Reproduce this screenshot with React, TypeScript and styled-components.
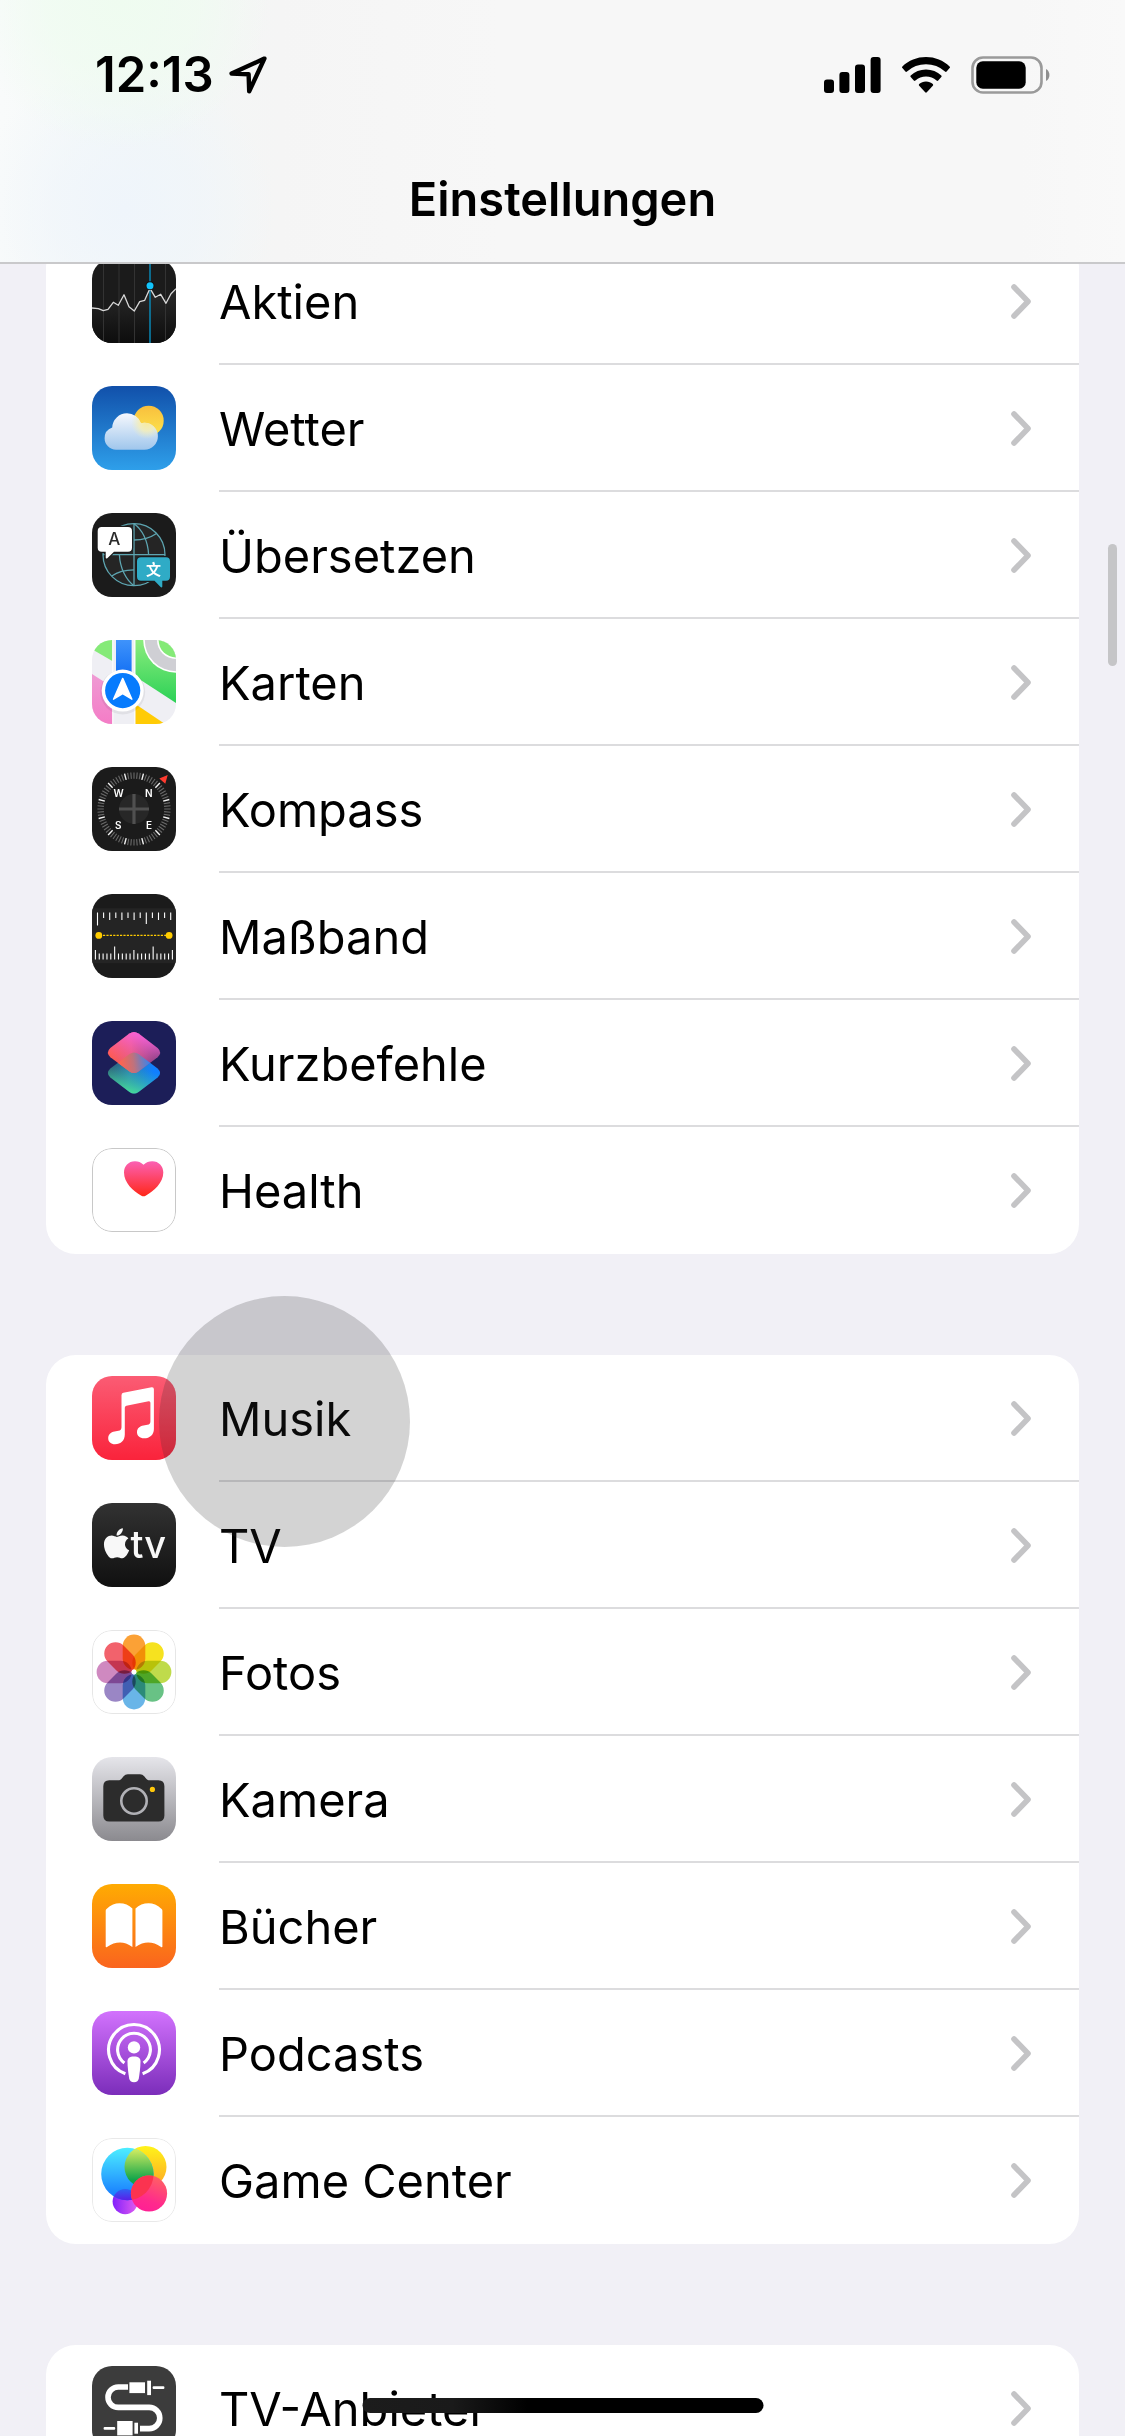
import type { ReactNode } from "react";
import styled, { createGlobalStyle } from "styled-components";
import { FaApple } from "react-icons/fa";

const GlobalStyle = createGlobalStyle`
  *, *::before, *::after { box-sizing: border-box; }
  body {
    margin: 0;
    background: #f1f0f6;
    color: #000;
    font-family: Inter, "Liberation Sans", sans-serif;
  }
`;

const Screen = styled.div`
  position: relative;
  display: flex;
  flex-direction: column;
  height: 100vh;
  overflow: hidden;
`;

const Header = styled.header`
  flex: none;
  padding: 45px 0 33px;
  border-bottom: 2px solid #c9c9cb;
  background:
    radial-gradient(ellipse 150px 150px at 120px 0, #effcf0 0%, rgba(239, 252, 240, 0.7) 50%, rgba(239, 252, 240, 0) 100%),
    radial-gradient(ellipse 150px 150px at 125px 210px, #eff5fb 0%, rgba(239, 245, 251, 0.6) 50%, rgba(239, 245, 251, 0) 100%),
    linear-gradient(90deg, #f9fbfb 0, #f3f7f6 150px, #f5f5f5 280px, #f7f7f7 500px, #f7f7f7 1020px, #f9f9f9 100%);
`;

const StatusBar = styled.div`
  display: flex;
  align-items: center;
  justify-content: space-between;
  padding: 0 75px 0 95px;
`;

const StatusGroup = styled.div<{ $gap: number }>`
  display: flex;
  align-items: center;
  gap: ${({ $gap }) => $gap}px;
`;

const Time = styled.time`
  font-size: 49px;
  line-height: 60px;
  font-weight: 600;
`;

const Title = styled.h1`
  margin: 64px 0 0;
  font-size: 47px;
  line-height: 60px;
  font-weight: 600;
  text-align: center;
`;

const Content = styled.main`
  flex: 1;
  min-height: 0;
  overflow: hidden;
`;

const Groups = styled.div`
  display: flex;
  flex-direction: column;
  gap: 101px;
  margin: -26px 46px 0;
`;

const Card = styled.ul`
  margin: 0;
  padding: 0;
  list-style: none;
  overflow: hidden;
  border-radius: 30px;
  background: #fff;
`;

const RowBody = styled.span`
  display: flex;
  flex: 1;
  align-items: center;
  justify-content: space-between;
  padding: 2px 48px 0 0;
  border-bottom: 2px solid #dcdcde;
`;

const Row = styled.a`
  display: flex;
  height: 127px;
  color: inherit;
  text-decoration: none;

  li:last-child > & ${RowBody} {
    border-bottom-color: transparent;
  }
`;

const IconTile = styled.span<{ $bg: string; $outline?: string }>`
  position: relative;
  flex: none;
  width: 84px;
  height: 84px;
  margin: 21px 43px 22px 46px;
  overflow: hidden;
  border-radius: 20px;
  background: ${({ $bg }) => $bg};

  &::after {
    content: "";
    position: absolute;
    inset: 0;
    border-radius: inherit;
    border: ${({ $outline }) => ($outline ? `1px solid ${$outline}` : "none")};
  }

  > svg { display: block; width: 100%; height: 100%; }
`;

const Label = styled.span`
  font-size: 47px;
  line-height: 60px;
`;

const Touch = styled.div`
  position: absolute;
  top: 1296px;
  left: 159px;
  width: 251px;
  height: 251px;
  border-radius: 50%;
  background: rgba(48, 48, 48, 0.21);
  pointer-events: none;
`;

const ScrollThumb = styled.div`
  position: absolute;
  top: 544px;
  right: 8px;
  width: 9px;
  height: 122px;
  border-radius: 5px;
  background: #c5c5c7;
`;

const HomeIndicator = styled.div`
  position: absolute;
  bottom: 23px;
  left: 50%;
  width: 401px;
  height: 15px;
  transform: translateX(-50%);
  border-radius: 8px;
  background: linear-gradient(90deg, #1c1c1c 0, #1a1a1a 90px, #000 165px);
`;

function Vertical({ id, from, to }: { id: string; from: string; to: string }) {
  return (
    <linearGradient id={id} x1="0" y1="0" x2="0" y2="1">
      <stop offset="0" stopColor={from} />
      <stop offset="1" stopColor={to} />
    </linearGradient>
  );
}

function Art({ children }: { children?: ReactNode }) {
  return (
    <svg viewBox="0 0 84 84" aria-hidden="true">
      {children}
    </svg>
  );
}

const stockLine =
  "0,49 6.3,49.7 11.3,51.7 16,50.3 21.3,43.3 26.3,46.3 32,35.7 37,47.7 42.3,52 47.7,42.7 52.7,41.3 58,29.3 63.3,38.3 68.7,35.3 74,44.3 79,34.7 84,29.7";

function StocksArt() {
  return (
    <Art>
      <defs><Vertical id="stFill" from="#2a2a2a" to="#0d0d0d" /></defs>
      <polygon points={`${stockLine} 84,84 0,84`} fill="url(#stFill)" />
      {[11.5, 27, 42.5, 73.5].map((x) => (
        <path key={x} d={`M${x} 0V84`} stroke="#333" strokeWidth="1" />
      ))}
      <path d="M58 0V84" stroke="#0a87b4" strokeWidth="1.5" />
      <polyline points={stockLine} fill="none" stroke="#d8d8d8" strokeWidth="1.3" strokeLinejoin="round" />
      <circle cx="58" cy="26.7" r="4.4" fill="#111" />
      <circle cx="58" cy="26.7" r="3.5" fill="#12c4fb" />
    </Art>
  );
}

function WeatherArt() {
  return (
    <Art>
      <defs>
        <Vertical id="wSun" from="#f8bf3d" to="#fde44d" />
        <linearGradient id="wCloud" gradientUnits="userSpaceOnUse" x1="0" y1="27" x2="0" y2="64">
          <stop offset="0" stopColor="#f6f8fd" />
          <stop offset="1" stopColor="#9fc6ec" />
        </linearGradient>
        <radialGradient id="wGlow">
          <stop offset="0" stopColor="#f8ea9a" stopOpacity="0.95" />
          <stop offset="0.5" stopColor="#f6eeb4" stopOpacity="0.8" />
          <stop offset="1" stopColor="#e8edc8" stopOpacity="0" />
        </radialGradient>
        <clipPath id="wShape">
          <circle cx="35" cy="42" r="14.8" />
          <circle cx="24" cy="52.3" r="11.4" />
          <circle cx="52.4" cy="50.2" r="13.5" />
          <rect x="24" y="45" width="28.4" height="18.7" />
        </clipPath>
      </defs>
      <circle cx="56.7" cy="34.7" r="15" fill="url(#wSun)" />
      <g clipPath="url(#wShape)">
        <rect width="84" height="84" fill="url(#wCloud)" />
        <circle cx="55" cy="37" r="16" fill="url(#wGlow)" />
      </g>
    </Art>
  );
}

function TranslateArt() {
  return (
    <Art>
      <g fill="none" stroke="#5da5b1" strokeWidth="1.3">
        <circle cx="42" cy="41.7" r="31" fill="#252525" />
        <path d="M42 10.7V72.7M11 41.7H73" />
        <path d="M42 10.7C50 16 56 28 56.6 41.7M42 72.7C34 67 28 55 27.4 41.7" />
        <path d="M42 27C50 27 58 25 64.5 20.5M42 56.8C34 56.8 26 58.5 19.8 63" />
      </g>
      <g stroke="#1b1b1b" strokeWidth="2.4" paintOrder="stroke">
        <path
          d="M9.7 14H36a4 4 0 0 1 4 4V34.7a4 4 0 0 1-4 4H22L15.3 45.2c-1 .8-1.6.4-1.6-.7V38.7H9.7a4 4 0 0 1-4-4V18a4 4 0 0 1 4-4Z"
          fill="#fff"
        />
        <path
          d="M49 44.3H74a4 4 0 0 1 4 4V63.7a4 4 0 0 1-4 4H70.3V73.4c0 1.2-.9 1.4-1.7.7L62.5 67.7H49a4 4 0 0 1-4-4V48.3a4 4 0 0 1 4-4Z"
          fill="#2fabc6"
        />
      </g>
      <text x="22.2" y="32.4" textAnchor="middle" fontFamily="Inter, sans-serif" fontSize="17" fontWeight="500" fill="#2a2a2a">A</text>
      <text x="61.5" y="61.6" textAnchor="middle" fontFamily="'Noto Sans CJK SC', sans-serif" fontSize="15" fontWeight="700" fill="#fff">文</text>
    </Art>
  );
}

function MapsArt() {
  return (
    <Art>
      <defs>
        <Vertical id="mGreen" from="#8bec7d" to="#2bd156" />
        <Vertical id="mPink" from="#ef9bd4" to="#f47cc6" />
        <Vertical id="mBlue" from="#3f93fb" to="#0d6bf3" />
      </defs>
      <path d="M0 0H20.3V21L0 9.2Z" fill="#85ea78" />
      <path d="M43.3 0H84V63L43.3 36.5Z" fill="url(#mGreen)" />
      <path d="M0 34L20.3 47V84H0Z" fill="url(#mPink)" />
      <path d="M43.3 64L73 84H43.3Z" fill="#ffcb05" />
      <path d="M20.8 0V84M42.8 0V84" stroke="#fff" strokeWidth="1" />
      <rect x="24" width="15.6" height="40" fill="url(#mBlue)" />
      <circle cx="84" cy="0" r="32.8" fill="#fff" />
      <circle cx="84" cy="0" r="31.2" fill="#cfcfd4" />
      <circle cx="84" cy="0" r="19" fill="#fff" />
      <circle cx="84" cy="0" r="17.4" fill="#84ea77" />
      <circle cx="30.7" cy="52" r="22.5" fill="#000" opacity="0.06" />
      <circle cx="30.7" cy="50.6" r="21" fill="#fff" />
      <circle cx="30.7" cy="50.6" r="17.6" fill="#067bfd" />
      <path d="M30.7 38.4L39.9 59.2L30.7 53.6L21.5 59.2Z" fill="#fff" stroke="#fff" strokeWidth="1.4" strokeLinejoin="round" />
    </Art>
  );
}

function CompassArt() {
  const ticks = Array.from({ length: 72 }, (_, i) => i * 5);
  return (
    <Art>
      {ticks.map((deg) => {
        const major = deg % 30 === 15;
        return (
          <path
            key={deg}
            d="M42 5.4V11.8"
            transform={`rotate(${deg} 42 42)`}
            stroke={major ? "#f4f4f4" : "#6a6a6a"}
            strokeWidth={major ? 1.4 : 1.1}
          />
        );
      })}
      <circle cx="42" cy="42" r="15" fill="#272727" />
      <path d="M42 27V57M27 42H57" stroke="#505050" strokeWidth="3.2" />
      <path d="M67.3 11.4L75.7 8L73.3 16.8Z" fill="#ff3b2f" />
      <g fontFamily="Inter, sans-serif" fontSize="10" fontWeight="600" fill="#fff" textAnchor="middle">
        <text x="26.5" y="29.8">W</text>
        <text x="56.7" y="29.8">N</text>
        <text x="26.3" y="61.6">S</text>
        <text x="57" y="61.6">E</text>
      </g>
    </Art>
  );
}

function MeasureArt() {
  const top = Array.from({ length: 13 }, (_, i) => ({
    x: 5.5 + i * 6.1,
    h: i === 0 ? 13 : i === 8 ? 11.5 : i % 2 ? 5.5 : 7.5,
  }));
  const bottom = Array.from({ length: 21 }, (_, i) => ({
    x: 3.4 + i * 3.85,
    h: i % 10 === 5 ? 13 : i % 5 === 0 ? 9.5 : 6,
  }));
  return (
    <Art>
      <rect y="14.3" width="84" height="55" fill="#242424" />
      {top.map(({ x, h }) => (
        <path key={x} d={`M${x} 18.4v${h}`} stroke="#fff" strokeWidth="1.1" />
      ))}
      {bottom.map(({ x, h }) => (
        <path key={x} d={`M${x} 65.4v${-h}`} stroke="#fff" strokeWidth="1.1" />
      ))}
      <path d="M11 41.4H74" stroke="#ffcc00" strokeWidth="1.4" strokeDasharray="2.2 1.2" />
      <circle cx="6.8" cy="41.4" r="3.4" fill="#ffcc00" />
      <circle cx="77.1" cy="41.4" r="3.4" fill="#ffcc00" />
    </Art>
  );
}

const diamond = (cy: number) =>
  `M37.5 ${cy - 19}Q42 ${cy - 22} 46.5 ${cy - 19}L65.6 ${cy - 4.6}Q70.6 ${cy} 65.6 ${cy + 4.6}L46.5 ${cy + 19}Q42 ${cy + 22} 37.5 ${cy + 19}L18.4 ${cy + 4.6}Q13.4 ${cy} 18.4 ${cy - 4.6}Z`;

function ShortcutsArt() {
  return (
    <Art>
      <defs>
        <linearGradient id="kBlue" gradientUnits="userSpaceOnUse" x1="18" y1="46" x2="62" y2="50">
          <stop offset="0" stopColor="#2c4f72" stopOpacity="0.9" />
          <stop offset="0.45" stopColor="#2b84b4" />
          <stop offset="1" stopColor="#107fff" />
        </linearGradient>
        <linearGradient id="kGreen" gradientUnits="userSpaceOnUse" x1="38" y1="74" x2="46" y2="46">
          <stop offset="0" stopColor="#4be394" />
          <stop offset="1" stopColor="#35b9a8" stopOpacity="0" />
        </linearGradient>
        <linearGradient id="kPink" gradientUnits="userSpaceOnUse" x1="46" y1="10" x2="34" y2="44">
          <stop offset="0" stopColor="#fb62e0" />
          <stop offset="1" stopColor="#fb62b0" stopOpacity="0" />
        </linearGradient>
        <linearGradient id="kRed" gradientUnits="userSpaceOnUse" x1="18" y1="34" x2="66" y2="30">
          <stop offset="0" stopColor="#ff5a4d" />
          <stop offset="0.45" stopColor="#e45a76" />
          <stop offset="0.75" stopColor="#8c4279" />
          <stop offset="1" stopColor="#3b2a5c" />
        </linearGradient>
        <linearGradient id="kMix" gradientUnits="userSpaceOnUse" x1="28" y1="44" x2="58" y2="40">
          <stop offset="0" stopColor="#ff644f" />
          <stop offset="0.45" stopColor="#c0727c" />
          <stop offset="1" stopColor="#3484f0" />
        </linearGradient>
        <clipPath id="kClip"><path d={diamond(31.6)} /></clipPath>
      </defs>
      <path d={diamond(52)} fill="url(#kBlue)" />
      <path d={diamond(52)} fill="url(#kGreen)" />
      <path d={diamond(31.6)} fill="url(#kRed)" />
      <path d={diamond(31.6)} fill="url(#kPink)" />
      <g clipPath="url(#kClip)"><path d={diamond(52)} fill="url(#kMix)" /></g>
    </Art>
  );
}

function HealthArt() {
  return (
    <Art>
      <defs><Vertical id="hHeart" from="#fb61b4" to="#ff2718" /></defs>
      <path
        d="M51.5 16.8C54 14.4 57 13.3 60.2 13.3C66.8 13.3 71.3 18.2 71.3 24.6C71.3 34.5 62 43.3 53.6 47.8Q51.5 48.9 49.4 47.8C41 43.3 32 34.5 32 24.6C32 18.2 36.4 13.3 43 13.3C46.2 13.3 49 14.4 51.5 16.8Z"
        fill="url(#hHeart)"
      />
    </Art>
  );
}

function MusicArt() {
  return (
    <Art>
      <path
        d="M31.4 16.8L59.6 11.3Q61.9 11 61.9 13.2V53C61.9 58.6 58 62.3 52 62.3C47.8 62.3 45 59.6 45 56.2C45 52.6 47.6 50.3 51.5 49.6L55.4 48.8Q58.4 48.2 58.4 45.4V26.7Q58.4 24.9 56.6 25.2L34.4 29.7Q32.8 30.1 32.8 31.8V58.5C32.8 64.4 29 68.2 23 68.2C18.9 68.2 16.2 65.7 16.2 62.2C16.2 58.6 18.7 56.2 22.6 55.5L26.4 54.8Q29.5 54.2 29.5 51.2V19.2Q29.5 17.2 31.4 16.8Z"
        fill="#fff"
      />
    </Art>
  );
}

function TvArt() {
  return (
    <Art>
      <FaApple x="7.4" y="23.2" size={34.3} color="#f8f8f8" />
      <text x="38.6" y="54.8" fontFamily="Inter, sans-serif" fontSize="38" fontWeight="500" fill="#f8f8f8">tv</text>
    </Art>
  );
}

const petals = ["#fba136", "#f6e21f", "#bfdb4b", "#68c285", "#69b5e8", "#9a86c5", "#cf89c0", "#f2626c"];

const Petal = styled.rect`
  mix-blend-mode: multiply;
`;

function PhotosArt() {
  return (
    <Art>
      {petals.map((fill, i) => (
        <Petal key={fill} x="30.7" y="4.6" width="22.6" height="35.2" rx="11.3" fill={fill} transform={`rotate(${i * 45} 42 42)`} />
      ))}
      <circle cx="42" cy="42" r="2.4" fill="#fff" />
    </Art>
  );
}

function CameraArt() {
  return (
    <Art>
      <path
        d="M17.3 23.3H26C28 23.3 29 22.6 30.2 21L31.6 19.3Q33.2 17.3 35.8 17.3H48Q50.6 17.3 52.2 19.3L53.6 21C54.8 22.6 55.8 23.3 57.8 23.3H66.4Q72.4 23.3 72.4 29.3V58.4Q72.4 64.4 66.4 64.4H17.3Q11.3 64.4 11.3 58.4V29.3Q11.3 23.3 17.3 23.3Z"
        fill="#2c2c2c"
      />
      <circle cx="42" cy="44" r="12.7" fill="none" stroke="#b1b1b6" strokeWidth="2.6" />
      <circle cx="60.4" cy="32.4" r="2.6" fill="#ffc80a" />
    </Art>
  );
}

function BooksArt() {
  return (
    <Art>
      <path
        d="M14.5 25C19 21 23 19.3 27.5 19.3C32.5 19.3 37 21 40.4 24.6V62.9C36 60 32 58.6 28 58.6C23.5 58.6 19.5 60 15 63Q13.7 63.6 13.7 62.4V26.8Q13.7 25.7 14.5 25Z"
        fill="#fff"
      />
      <path
        d="M69.6 25C65.1 21 61.1 19.3 56.6 19.3C51.6 19.3 46.9 21 43.5 24.6V62.9C47.9 60 52.1 58.6 56.1 58.6C60.6 58.6 64.6 60 69.1 63Q70.4 63.6 70.4 62.4V26.8Q70.4 25.7 69.6 25Z"
        fill="#fff"
      />
    </Art>
  );
}

function PodcastsArt() {
  return (
    <Art>
      <g fill="none" stroke="#fff" strokeWidth="3.1">
        <path d="M33.4 62.8A25.4 25.4 0 1 1 50.6 62.8" />
        <path d="M32.4 52A16.4 16.4 0 1 1 51.6 52" />
      </g>
      <circle cx="42" cy="36.4" r="6.2" fill="#fff" />
      <path
        d="M42 45.4C46.6 45.4 48.5 47 48.5 50.3C48.5 56 47.6 62.5 46.8 67.6Q46.2 71.3 42 71.3Q37.8 71.3 37.2 67.6C36.4 62.5 35.5 56 35.5 50.3C35.5 47 37.4 45.4 42 45.4Z"
        fill="#fff"
      />
    </Art>
  );
}

function GameCenterArt() {
  return (
    <Art>
      <defs>
        <Vertical id="gBlue" from="#4deeff" to="#1373ff" />
        <Vertical id="gYellow" from="#fff31a" to="#fda424" />
        <linearGradient id="gGreen" gradientUnits="userSpaceOnUse" x1="0" y1="12" x2="0" y2="42">
          <stop offset="0" stopColor="#cdea60" />
          <stop offset="1" stopColor="#10a44a" />
        </linearGradient>
        <linearGradient id="gPink" x1="0.8" y1="0" x2="0.4" y2="1">
          <stop offset="0" stopColor="#ff6560" />
          <stop offset="0.7" stopColor="#ff2a8c" />
          <stop offset="1" stopColor="#ff1f95" />
        </linearGradient>
        <linearGradient id="gPurple" x1="0" y1="0" x2="1" y2="0">
          <stop offset="0" stopColor="#8320fb" />
          <stop offset="1" stopColor="#e25ef0" />
        </linearGradient>
        <linearGradient id="gIndigo" gradientUnits="userSpaceOnUse" x1="0" y1="51" x2="0" y2="62">
          <stop offset="0" stopColor="#2f62f4" />
          <stop offset="1" stopColor="#5a1fe8" />
        </linearGradient>
        <clipPath id="gClip"><circle cx="35.4" cy="36" r="26.2" /></clipPath>
      </defs>
      <circle cx="33.2" cy="63.6" r="12.6" fill="url(#gPurple)" />
      <circle cx="53.5" cy="29" r="21" fill="url(#gYellow)" />
      <circle cx="35.4" cy="36" r="26.2" fill="url(#gBlue)" />
      <g clipPath="url(#gClip)">
        <circle cx="53.5" cy="29" r="21" fill="url(#gGreen)" />
        <circle cx="33.2" cy="63.6" r="12.6" fill="url(#gIndigo)" />
      </g>
      <circle cx="57" cy="55.5" r="18.1" fill="url(#gPink)" />
      <g clipPath="url(#gClip)"><circle cx="57" cy="55.5" r="18.1" fill="#fb3350" /></g>
    </Art>
  );
}

function CableArt() {
  return (
    <Art>
      <path
        d="M36 21H26.2A10.2 10.2 0 0 0 26.2 41.4H57.2A10.6 10.6 0 0 1 57.2 62.6H48"
        fill="none"
        stroke="#fff"
        strokeWidth="5.6"
      />
      <g fill="#fff">
        <rect x="37.4" y="16.3" width="15.6" height="10.8" />
        <rect x="55.2" y="14.7" width="3.8" height="14.4" />
        <rect x="60.6" y="20.3" width="11.8" height="2.7" rx="1" />
        <rect x="25.2" y="55" width="15.4" height="14.4" />
        <rect x="42.4" y="56.7" width="3.6" height="11" />
        <rect x="11.6" y="61" width="11.6" height="2.7" rx="1" />
      </g>
    </Art>
  );
}

type App = { name: string; bg: string; outline?: string; art: ReactNode };

const groups: App[][] = [
  [
    { name: "Aktien", bg: "#1b1b1b", art: <StocksArt /> },
    { name: "Wetter", bg: "linear-gradient(#1150aa, #2e9fea)", art: <WeatherArt /> },
    { name: "Übersetzen", bg: "#1b1b1b", art: <TranslateArt /> },
    { name: "Karten", bg: "#efeff4", art: <MapsArt /> },
    { name: "Kompass", bg: "#1b1b1b", art: <CompassArt /> },
    { name: "Maßband", bg: "#1b1b1b", art: <MeasureArt /> },
    { name: "Kurzbefehle", bg: "#1c1e58", art: <ShortcutsArt /> },
    { name: "Health", bg: "#fff", outline: "#c8c8c8", art: <HealthArt /> },
  ],
  [
    { name: "Musik", bg: "linear-gradient(#fb5c74, #fa233b)", art: <MusicArt /> },
    { name: "TV", bg: "linear-gradient(#323232, #101010)", art: <TvArt /> },
    { name: "Fotos", bg: "#fff", outline: "#e6e6e6", art: <PhotosArt /> },
    { name: "Kamera", bg: "linear-gradient(#e5e5ea, #8b8a8f)", art: <CameraArt /> },
    { name: "Bücher", bg: "linear-gradient(#ffab02, #fa641e)", art: <BooksArt /> },
    { name: "Podcasts", bg: "linear-gradient(#d272fd, #7b2dba)", art: <PodcastsArt /> },
    { name: "Game Center", bg: "#fff", outline: "#e9e9e9", art: <GameCenterArt /> },
  ],
  [{ name: "TV-Anbieter", bg: "#3c3c3c", art: <CableArt /> }],
];

function Chevron() {
  return (
    <svg width="20" height="35" viewBox="0 0 20 35" aria-hidden="true">
      <path d="M3 3L17 17.5L3 32" fill="none" stroke="#c4c4c6" strokeWidth="5.6" strokeLinecap="round" strokeLinejoin="round" />
    </svg>
  );
}

function LocationArrow() {
  return (
    <svg width="38" height="38" viewBox="0 0 38 38" aria-hidden="true">
      <path d="M35.4 2.6L2.6 17.6L19.6 18.2L20.2 35.4Z" fill="none" stroke="#000" strokeWidth="4.4" strokeLinejoin="round" />
    </svg>
  );
}

function Signal() {
  return (
    <svg width="57" height="36" viewBox="0 0 57 36" aria-hidden="true">
      <rect x="0" y="22.4" width="10" height="13.6" rx="3" />
      <rect x="15.4" y="15" width="10" height="21" rx="3" />
      <rect x="31" y="7.4" width="10" height="28.6" rx="3" />
      <rect x="46.6" y="0" width="10" height="36" rx="3" />
    </svg>
  );
}

function Wifi() {
  return (
    <svg width="48" height="36" viewBox="0 0 48 36" aria-hidden="true">
      <path d="M24 0C33 0 41.4 3.4 47.6 9.4Q48.4 10.2 47.6 11L44.6 14.6Q43.8 15.4 43 14.6A28 28 0 0 0 5 14.6Q4.2 15.4 3.4 14.6L.4 11Q-.4 10.2 .4 9.4C6.6 3.4 15 0 24 0Z" />
      <path d="M24 12.4C30 12.4 35.2 14.6 39.3 18.4Q40.1 19.2 39.3 20L36.2 23.6Q35.4 24.3 34.6 23.6A16 16 0 0 0 13.4 23.6Q12.6 24.3 11.8 23.6L8.7 20Q7.9 19.2 8.7 18.4C12.8 14.6 18 12.4 24 12.4Z" />
      <path d="M24 24.6C26.8 24.6 29 25.5 30.8 27.1Q31.5 27.9 30.8 28.7L24.8 35.3Q24 36.1 23.2 35.3L17.2 28.7Q16.5 27.9 17.2 27.1C19 25.5 21.2 24.6 24 24.6Z" />
    </svg>
  );
}

function Battery() {
  return (
    <svg width="79" height="38" viewBox="0 0 79 38" aria-hidden="true">
      <rect x="1.5" y="1.5" width="69" height="35" rx="10.5" fill="none" stroke="#9a9a9a" strokeWidth="2.6" />
      <rect x="5.3" y="5.3" width="49.4" height="27.4" rx="6.5" />
      <path d="M75 13C79.6 15 79.6 23 75 25Z" fill="#8f8f8f" />
    </svg>
  );
}

export default function App() {
  return (
    <>
      <GlobalStyle />
      <Screen>
        <Header>
          <StatusBar>
            <StatusGroup $gap={15}>
              <Time>12:13</Time>
              <LocationArrow />
            </StatusGroup>
            <StatusGroup $gap={21}>
              <Signal />
              <Wifi />
              <Battery />
            </StatusGroup>
          </StatusBar>
          <Title>Einstellungen</Title>
        </Header>
        <Content>
          <Groups>
            {groups.map((apps) => (
              <Card key={apps[0].name}>
                {apps.map(({ name, bg, outline, art }) => (
                  <li key={name}>
                    <Row href="#">
                      <IconTile $bg={bg} $outline={outline}>{art}</IconTile>
                      <RowBody>
                        <Label>{name}</Label>
                        <Chevron />
                      </RowBody>
                    </Row>
                  </li>
                ))}
              </Card>
            ))}
          </Groups>
        </Content>
        <Touch />
        <ScrollThumb />
        <HomeIndicator />
      </Screen>
    </>
  );
}
